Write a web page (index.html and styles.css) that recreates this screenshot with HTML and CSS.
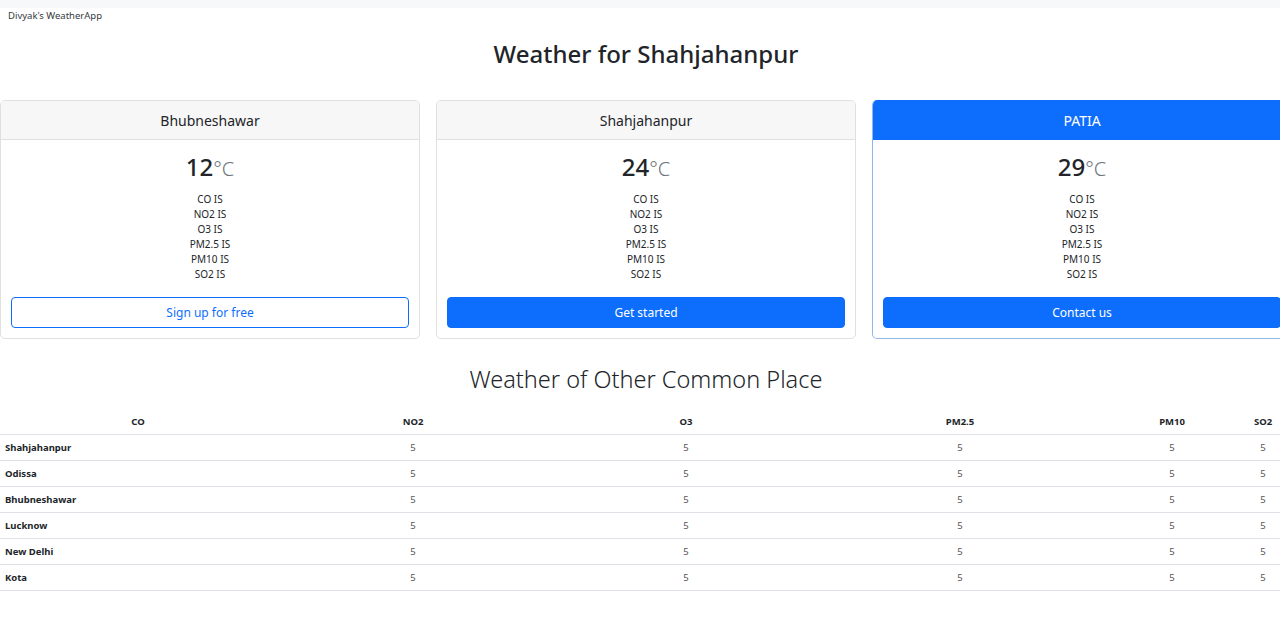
FILE: index.html
```html
<!DOCTYPE html>
<html lang="en">
<head>
<meta charset="utf-8">
<title>Divyak's WeatherApp</title>
<link rel="stylesheet" href="styles.css">
</head>
<body>
<div class="page">
<div class="strip"></div>
<nav class="brand">Divyak's WeatherApp</nav>
<h1 class="title">Weather for Shahjahanpur</h1>
<div class="cards">
  <div class="card">
    <div class="card-header">Bhubneshawar</div>
    <div class="card-body">
      <div class="temp">12<span class="unit">°C</span></div>
      <ul class="list">
        <li>CO IS</li><li>NO2 IS</li><li>O3 IS</li><li>PM2.5 IS</li><li>PM10 IS</li><li>SO2 IS</li>
      </ul>
      <button class="btn btn-outline">Sign up for free</button>
    </div>
  </div>
  <div class="card">
    <div class="card-header">Shahjahanpur</div>
    <div class="card-body">
      <div class="temp">24<span class="unit">°C</span></div>
      <ul class="list">
        <li>CO IS</li><li>NO2 IS</li><li>O3 IS</li><li>PM2.5 IS</li><li>PM10 IS</li><li>SO2 IS</li>
      </ul>
      <button class="btn btn-primary">Get started</button>
    </div>
  </div>
  <div class="card card-primary">
    <div class="card-header">PATIA</div>
    <div class="card-body">
      <div class="temp">29<span class="unit">°C</span></div>
      <ul class="list">
        <li>CO IS</li><li>NO2 IS</li><li>O3 IS</li><li>PM2.5 IS</li><li>PM10 IS</li><li>SO2 IS</li>
      </ul>
      <button class="btn btn-primary">Contact us</button>
    </div>
  </div>
</div>
<h2 class="subtitle">Weather of Other Common Place</h2>
<table class="table">
  <colgroup>
    <col class="c1"><col class="c2"><col class="c3"><col class="c4"><col class="c5"><col class="c6">
  </colgroup>
  <thead>
    <tr><th>CO</th><th>NO2</th><th>O3</th><th>PM2.5</th><th>PM10</th><th>SO2</th></tr>
  </thead>
  <tbody>
    <tr><th class="name">Shahjahanpur</th><td>5</td><td>5</td><td>5</td><td>5</td><td>5</td></tr>
    <tr><th class="name">Odissa</th><td>5</td><td>5</td><td>5</td><td>5</td><td>5</td></tr>
    <tr><th class="name">Bhubneshawar</th><td>5</td><td>5</td><td>5</td><td>5</td><td>5</td></tr>
    <tr><th class="name">Lucknow</th><td>5</td><td>5</td><td>5</td><td>5</td><td>5</td></tr>
    <tr><th class="name">New Delhi</th><td>5</td><td>5</td><td>5</td><td>5</td><td>5</td></tr>
    <tr><th class="name">Kota</th><td>5</td><td>5</td><td>5</td><td>5</td><td>5</td></tr>
  </tbody>
</table>
</div>
</body>
</html>
```
FILE: styles.css
```css
html, body {
  margin: 0;
  padding: 0;
}
html {
  overflow-x: hidden;
}
body {
  font-family: "Noto Sans", "Open Sans", sans-serif;
  color: #212529;
  background: #fff;
  overflow-x: hidden;
}
.page {
  width: 1292px;
}
.strip {
  height: 8px;
  background: #f7f8fa;
}
.brand {
  font-size: 9.5px;
  line-height: 15px;
  padding-left: 8px;
  color: #343a40;
}
.title {
  margin: 15px 0 0;
  text-align: center;
  font-size: 24px;
  font-weight: 500;
  line-height: 31px;
}
.cards {
  display: flex;
  gap: 16px;
  margin-top: 31px;
}
.card {
  flex: 0 0 420px;
  border: 1px solid #dfe0e2;
  border-radius: 5px;
  box-sizing: border-box;
  overflow: hidden;
  text-align: center;
}
.card-header {
  height: 38px;
  line-height: 39px;
  background: #f7f7f7;
  border-bottom: 1px solid #dfe0e2;
  font-size: 14px;
}
.card-primary {
  border-color: #8fb8e8;
  border-top: none;
}
.card-primary .card-header {
  height: 40px;
  line-height: 41px;
  background: #0d6efd;
  color: #fff;
  border-bottom: none;
}
.card-body {
  padding: 12px 10px 10px;
}
.temp {
  font-size: 24px;
  line-height: 29px;
  font-weight: 500;
}
.unit {
  font-size: 20px;
  font-weight: 300;
  color: #6c757d;
}
.list {
  list-style: none;
  margin: 9px 0 15px;
  padding: 0;
  font-size: 10px;
  line-height: 15px;
}
.btn {
  display: block;
  width: 100%;
  height: 31px;
  font-family: inherit;
  font-size: 12px;
  border-radius: 4px;
  border: 1px solid #0d6efd;
  cursor: pointer;
}
.btn-outline {
  background: #fff;
  color: #0d6efd;
}
.btn-primary {
  background: #0d6efd;
  color: #fff;
}
.subtitle {
  margin: 22px 0 0;
  text-align: center;
  font-size: 23.5px;
  font-weight: 300;
  line-height: 36px;
}
.table {
  margin-top: 12px;
  width: 1280px;
  table-layout: fixed;
  border-collapse: collapse;
  font-size: 9.5px;
}
.c1 { width: 276px; }
.c2 { width: 274px; }
.c3 { width: 272px; }
.c4 { width: 276px; }
.c5 { width: 148px; }
.c6 { width: 34px; }
.table th, .table td {
  height: 25px;
  padding: 0 5px;
  border-bottom: 1px solid #dee2e6;
  text-align: center;
  color: #212529;
}
.table thead th {
  border-bottom: 1px solid #dee2e6;
  font-weight: 700;
}
.table td {
  color: #555;
}
.table th.name {
  text-align: left;
  font-weight: 700;
}
```
